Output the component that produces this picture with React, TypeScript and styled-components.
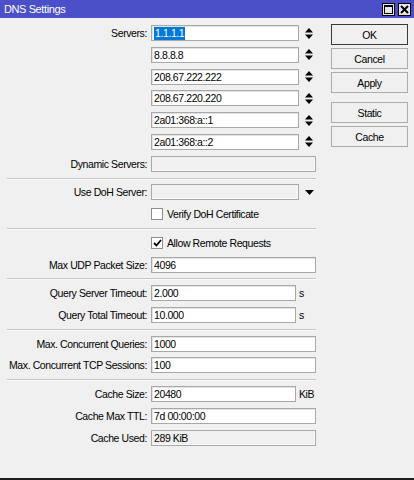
import React from 'react'
import styled, { createGlobalStyle, css } from 'styled-components'

const GlobalStyle = createGlobalStyle`
  html, body {
    margin: 0;
    padding: 0;
    background: #f0f0f0;
  }
  * {
    box-sizing: border-box;
  }
`

const Window = styled.div`
  width: 414px;
  height: 480px;
  display: flex;
  flex-direction: column;
  background: #f0f0f0;
  border-bottom: 2px solid #1e1e1e;
  font-family: 'Liberation Sans', Arial, sans-serif;
  font-size: 10.5px;
  letter-spacing: -0.4px;
  color: #000;
  overflow: hidden;
`

const TitleBar = styled.div`
  height: 18px;
  flex: 0 0 18px;
  background: #4b4fc8;
  display: flex;
  align-items: center;
  justify-content: space-between;
  padding: 0 3px 0 4px;
`

const Title = styled.span`
  color: #fff;
  font-size: 11px;
  letter-spacing: -0.4px;
`

const TitleButtons = styled.div`
  display: flex;
  gap: 3px;
`

const TitleButton = styled.div`
  width: 13px;
  height: 13px;
  background: #e6e6e6;
  border: 1px solid #000;
  display: flex;
  align-items: center;
  justify-content: center;
`

const Body = styled.div`
  flex: 1;
  display: flex;
  padding: 7px 6px 0 7px;
  gap: 15px;
`

const Form = styled.div`
  width: 309px;
  display: flex;
  flex-direction: column;
  gap: 5.8px;
`

const Row = styled.div`
  display: grid;
  grid-template-columns: 140px 165px;
  column-gap: 4px;
  align-items: center;
  height: 16px;
`

const Label = styled.span`
  text-align: right;
  white-space: nowrap;
`

const FieldLine = styled.div`
  display: flex;
  align-items: center;
  height: 16px;
`

const Field = styled.div<{ $width?: number; $disabled?: boolean }>`
  width: ${p => (p.$width ? `${p.$width}px` : '100%')};
  height: 16px;
  flex: 0 0 auto;
  background: ${p => (p.$disabled ? '#f0f0f0' : '#fff')};
  border: 1px solid #a8a8a8;
  box-shadow: ${p => (p.$disabled ? 'inset -1px -1px 0 #fcfcfc' : 'inset 1px 1px 0 #e3e3e3')};
  padding: 0 2px;
  display: flex;
  align-items: center;
  white-space: nowrap;
  overflow: hidden;
`

const Selected = styled.span`
  background: #0078d7;
  color: #fff;
  padding: 0 1px;
  line-height: 13px;
`

const Unit = styled.span`
  margin-left: 3px;
`

const Extra = styled.div`
  flex: 1;
  display: flex;
  align-items: center;
  padding-left: 6px;
`

const Separator = styled.div`
  height: 1px;
  width: 309px;
  background: #c6c6c6;
  box-shadow: 0 1px 0 #fafafa;
`

const CheckLabel = styled.label`
  display: flex;
  align-items: center;
  gap: 4px;
`

const CheckBox = styled.span`
  width: 12px;
  height: 12px;
  background: #fff;
  border: 1px solid #8e8e8e;
  display: flex;
  align-items: center;
  justify-content: center;
`

const ButtonColumn = styled.div`
  width: 77px;
  display: flex;
  flex-direction: column;
  gap: 3px;
  margin-top: -1px;
`

const Button = styled.div<{ $primary?: boolean; $spaced?: boolean }>`
  height: 21px;
  display: flex;
  align-items: center;
  justify-content: center;
  background: #f0f0f0;
  border: 1px solid #adadad;
  ${p =>
    p.$primary &&
    css`
      border-color: #3a3a3a;
    `}
  ${p =>
    p.$spaced &&
    css`
      margin-top: 6px;
    `}
`

const SpinIcon = () => (
  <svg width="8" height="11" viewBox="0 0 8 11">
    <path d="M4 0 L8 4.5 L0 4.5 Z M0 6.5 L8 6.5 L4 11 Z" fill="#000" />
  </svg>
)

const DropIcon = () => (
  <svg width="9" height="5" viewBox="0 0 9 5">
    <path d="M0 0 L9 0 L4.5 5 Z" fill="#000" />
  </svg>
)

const servers = ['1.1.1.1', '8.8.8.8', '208.67.222.222', '208.67.220.220', '2a01:368:a::1', '2a01:368:a::2']

export default function App() {
  return (
    <>
      <GlobalStyle />
      <Window>
        <TitleBar>
          <Title>DNS Settings</Title>
          <TitleButtons>
            <TitleButton>
              <svg width="9" height="9" viewBox="0 0 9 9">
                <rect x="0.5" y="0.5" width="8" height="8" fill="none" stroke="#000" />
                <rect x="0" y="0" width="9" height="2" fill="#000" />
              </svg>
            </TitleButton>
            <TitleButton>
              <svg width="9" height="9" viewBox="0 0 9 9">
                <path d="M1 1 L8 8 M8 1 L1 8" stroke="#000" strokeWidth="2" />
              </svg>
            </TitleButton>
          </TitleButtons>
        </TitleBar>
        <Body>
          <Form>
            {servers.map((s, i) => (
              <Row key={s}>
                <Label>{i === 0 ? 'Servers:' : ''}</Label>
                <FieldLine>
                  <Field $width={148}>{i === 0 ? <Selected>{s}</Selected> : s}</Field>
                  <Extra>
                    <SpinIcon />
                  </Extra>
                </FieldLine>
              </Row>
            ))}
            <Row>
              <Label>Dynamic Servers:</Label>
              <Field $disabled />
            </Row>
            <Separator />
            <Row>
              <Label>Use DoH Server:</Label>
              <FieldLine>
                <Field $width={148} $disabled />
                <Extra>
                  <DropIcon />
                </Extra>
              </FieldLine>
            </Row>
            <Row>
              <Label />
              <CheckLabel>
                <CheckBox />
                Verify DoH Certificate
              </CheckLabel>
            </Row>
            <Separator />
            <Row>
              <Label />
              <CheckLabel>
                <CheckBox>
                  <svg width="9" height="8" viewBox="0 0 9 8">
                    <path d="M1 4 L3.5 6.5 L8 1" fill="none" stroke="#000" strokeWidth="1.8" />
                  </svg>
                </CheckBox>
                Allow Remote Requests
              </CheckLabel>
            </Row>
            <Row>
              <Label>Max UDP Packet Size:</Label>
              <Field>4096</Field>
            </Row>
            <Separator />
            <Row>
              <Label>Query Server Timeout:</Label>
              <FieldLine>
                <Field $width={145}>2.000</Field>
                <Unit>s</Unit>
              </FieldLine>
            </Row>
            <Row>
              <Label>Query Total Timeout:</Label>
              <FieldLine>
                <Field $width={145}>10.000</Field>
                <Unit>s</Unit>
              </FieldLine>
            </Row>
            <Separator />
            <Row>
              <Label>Max. Concurrent Queries:</Label>
              <Field>1000</Field>
            </Row>
            <Row>
              <Label>Max. Concurrent TCP Sessions:</Label>
              <Field>100</Field>
            </Row>
            <Separator />
            <Row>
              <Label>Cache Size:</Label>
              <FieldLine>
                <Field $width={145}>20480</Field>
                <Unit>KiB</Unit>
              </FieldLine>
            </Row>
            <Row>
              <Label>Cache Max TTL:</Label>
              <Field>7d 00:00:00</Field>
            </Row>
            <Row>
              <Label>Cache Used:</Label>
              <Field $disabled>289 KiB</Field>
            </Row>
          </Form>
          <ButtonColumn>
            <Button $primary>OK</Button>
            <Button>Cancel</Button>
            <Button>Apply</Button>
            <Button $spaced>Static</Button>
            <Button>Cache</Button>
          </ButtonColumn>
        </Body>
      </Window>
    </>
  )
}
